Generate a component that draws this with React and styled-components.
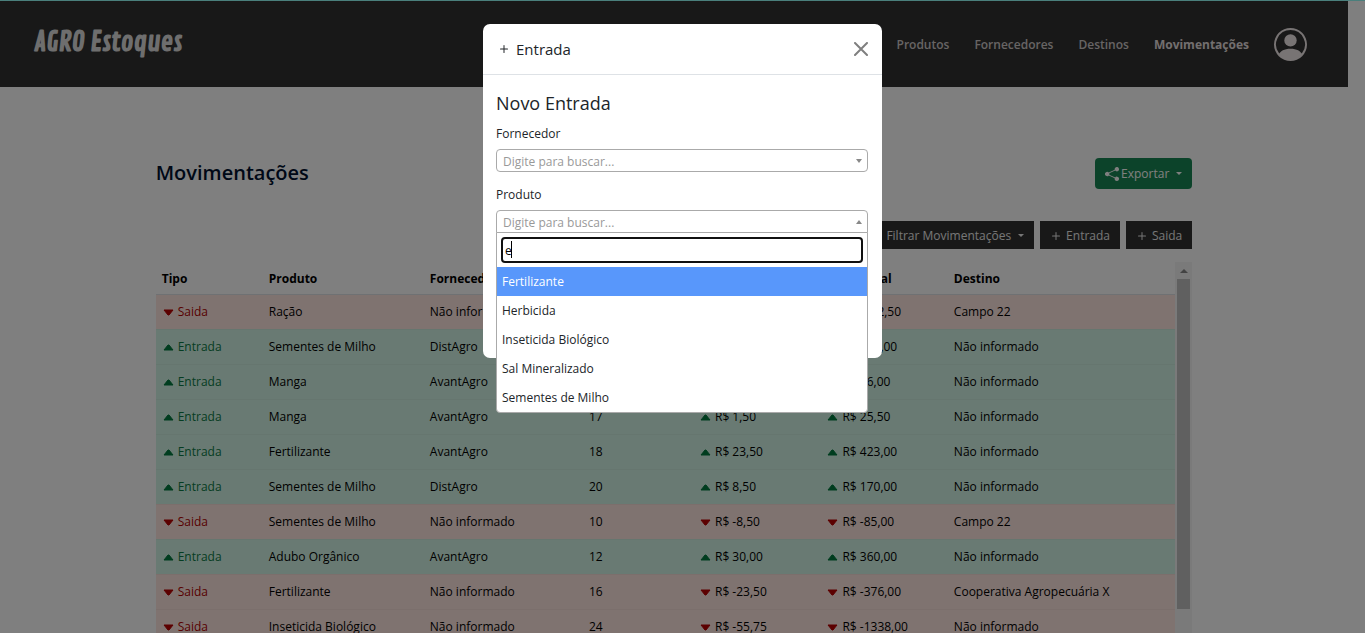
import React from "react";
import styled, { createGlobalStyle } from "styled-components";
import { BsPersonCircle, BsPlus, BsFunnel, BsShareFill } from "react-icons/bs";

const GlobalStyle = createGlobalStyle`
  *, *::before, *::after { box-sizing: border-box; }
  html, body { margin: 0; }
  body {
    overflow: hidden;
    background: #fff;
    color: #212529;
    font-family: "Open Sans", "Noto Sans", sans-serif;
    font-size: 12px;
    line-height: 20px;
  }
  button, input, select { font: inherit; color: inherit; margin: 0; }
  h1, h2, h3, ul { margin: 0; padding: 0; }
`;

const Page = styled.div`
  height: 100vh;
  overflow: hidden;
  border-top: 1px solid #94fff8;
  padding-right: 17px;
`;

const Header = styled.header`
  display: flex;
  align-items: center;
  justify-content: space-between;
  height: 86px;
  padding: 0 41px 0 34px;
  background: #303030;
`;

const Logo = styled.a`
  padding-bottom: 2px;
  color: #dcdcdc;
  font: 700 26px/32px "Contrail One", "Roboto Condensed", sans-serif;
  text-decoration: none;
`;

const Nav = styled.nav`
  display: flex;
  align-items: center;
  gap: 25px;
`;

const NavLink = styled.a`
  padding-top: 1px;
  color: ${(p) => (p.$active ? "#e4dede" : "#cfc9c9")};
  font-weight: ${(p) => (p.$active ? 700 : 600)};
  text-decoration: none;
`;

const ProfileButton = styled.button`
  display: flex;
  padding: 0;
  border: 0;
  background: none;
  color: #f0e8e8;
`;

const Content = styled.main`
  width: 76.9%;
  margin: 0 auto;
  padding-top: 71px;
`;

const TitleRow = styled.div`
  display: flex;
  align-items: center;
  justify-content: space-between;
`;

const Title = styled.h1`
  padding-bottom: 2px;
  color: #00102e;
  font-size: 20px;
  font-weight: 600;
  line-height: 28px;
`;

const ExportButton = styled.button`
  display: flex;
  align-items: center;
  gap: 2px;
  height: 31px;
  padding: 0 10px;
  border: 0;
  border-radius: 4px;
  background: #198754;
  color: #fff;
`;

const Caret = styled.span`
  margin-left: 5px;
  border: solid transparent;
  border-width: 3px 3px 0;
  border-top-color: currentColor;
`;

const Toolbar = styled.div`
  display: flex;
  justify-content: flex-end;
  gap: 6px;
  padding: 32px 0 13px;
`;

const DarkButton = styled.button`
  display: flex;
  align-items: center;
  gap: 2px;
  height: 28px;
  padding: 1px 10px 0 8px;
  border: 0;
  background: #303030;
  color: #ececec;
`;

const FilterIcon = styled(BsFunnel)`
  margin-right: 3px;
`;

const TableBox = styled.div`
  display: flex;
`;

const Table = styled.table`
  flex: 1;
  table-layout: fixed;
  border-collapse: collapse;
  color: #000;
`;

const HeadCell = styled.th`
  width: ${(p) => p.$width};
  height: 32px;
  padding: 2px 6px 0;
  border-bottom: 1px solid #dee2e6;
  font-weight: 700;
  text-align: left;
  white-space: nowrap;
`;

const Row = styled.tr`
  background: ${(p) => (p.$out ? "#ffe6e0" : "#d3f5e6")};
`;

const Cell = styled.td`
  height: 35px;
  padding: 1px 6px 0;
  border-bottom: 1px solid rgba(0, 0, 0, 0.03);
  color: ${(p) => p.$color || "#000"};
  white-space: nowrap;
`;

const Trend = styled.span`
  display: flex;
  align-items: center;
  gap: 4px;
  padding-left: 1px;

  svg { color: ${(p) => (p.$out ? "#b80000" : "#007a3e")}; }
`;

const Track = styled.div`
  width: 17px;
  padding: 0 2px;
  background: #f4f4f4;
`;

const TrackArrow = styled.div`
  display: flex;
  align-items: center;
  justify-content: center;
  height: 17px;

  &::before {
    content: "";
    border: solid transparent;
    border-width: 0 4px 4px;
    border-bottom-color: #868686;
  }
`;

const Thumb = styled.div`
  height: 330px;
  background: #c1c1c1;
`;

const Backdrop = styled.div`
  position: fixed;
  inset: 0;
  background: rgba(0, 0, 0, 0.5);
`;

const Modal = styled.div`
  position: relative;
  width: 399px;
  min-height: 334px;
  margin: 24px auto 0;
  border-radius: 7px;
  background: #fff;
`;

const ModalHeader = styled.div`
  display: flex;
  align-items: center;
  justify-content: space-between;
  height: 51px;
  padding: 0 14px 0 13px;
  border-bottom: 1px solid #dee2e6;
`;

const ModalTitle = styled.h2`
  display: flex;
  align-items: center;
  gap: 4px;
  font-size: 15px;
  font-weight: 400;
`;

const CloseButton = styled.button`
  display: flex;
  padding: 0;
  border: 0;
  background: none;
  color: #7f7f7f;
`;

const ModalBody = styled.div`
  padding: 15px 14px 16px 13px;
`;

const FormTitle = styled.h3`
  margin-bottom: 8px;
  font-size: 18px;
  font-weight: 400;
  line-height: 26px;
`;

const Field = styled.div`
  position: relative;
  margin-bottom: 13px;
`;

const Label = styled.label`
  display: block;
  margin-bottom: 5px;
`;

const SelectBox = styled.div`
  display: flex;
  align-items: center;
  height: 23px;
  padding-right: 5px;
  border: 1px solid #aaa;
  border-radius: ${(p) => (p.$open ? "4px 4px 0 0" : "4px")};

  &::after {
    content: "";
    border: solid transparent;
    border-width: ${(p) => (p.$open ? "0 3px 4px" : "4px 3px 0")};
    border-top-color: ${(p) => (p.$open ? "transparent" : "#888")};
    border-bottom-color: ${(p) => (p.$open ? "#888" : "transparent")};
  }
`;

const Select = styled.select`
  flex: 1;
  height: 21px;
  padding: 2px 6px 0;
  border: 0;
  outline: 0;
  appearance: none;
  background: none;
  color: #999;
`;

const Menu = styled.div`
  position: absolute;
  top: 100%;
  left: 0;
  right: 0;
  margin-top: -1px;
  border: 1px solid #aaa;
  border-radius: 0 0 4px 4px;
  background: #fff;
`;

const SearchBox = styled.div`
  position: relative;
  padding: 4px;
`;

const SearchInput = styled.input`
  display: block;
  width: 100%;
  height: 26px;
  padding: 0 2px;
  border: 2px solid #101010;
  border-radius: 4px;
  outline: 0;
  background: #fff;
  color: #000;
`;

const TextCaret = styled.span`
  position: absolute;
  top: 8px;
  left: 14px;
  width: 1px;
  height: 17px;
  background: #000;
`;

const Options = styled.ul`
  list-style: none;
`;

const Option = styled.li`
  height: 29px;
  padding: 5px;
  line-height: 19px;
  background: ${(p) => (p.$active ? "#5897fb" : "transparent")};
  color: ${(p) => (p.$active ? "#fff" : "#212529")};
`;

const columns = [
  ["Tipo", "10.5%"],
  ["Produto", "15.8%"],
  ["Fornecedor", "15.6%"],
  ["Quantidade", "10.8%"],
  ["Valor", "12.5%"],
  ["Valor Total", "12.5%"],
  ["Destino", "22.3%"],
];

const rows = [
  ["Saida", "Ração", "Não informado", "15", "R$ -27,50", "R$ -412,50", "Campo 22"],
  ["Entrada", "Sementes de Milho", "DistAgro", "20", "R$ 8,50", "R$ 170,00", "Não informado"],
  ["Entrada", "Manga", "AvantAgro", "24", "R$ 1,50", "R$ 36,00", "Não informado"],
  ["Entrada", "Manga", "AvantAgro", "17", "R$ 1,50", "R$ 25,50", "Não informado"],
  ["Entrada", "Fertilizante", "AvantAgro", "18", "R$ 23,50", "R$ 423,00", "Não informado"],
  ["Entrada", "Sementes de Milho", "DistAgro", "20", "R$ 8,50", "R$ 170,00", "Não informado"],
  ["Saida", "Sementes de Milho", "Não informado", "10", "R$ -8,50", "R$ -85,00", "Campo 22"],
  ["Entrada", "Adubo Orgânico", "AvantAgro", "12", "R$ 30,00", "R$ 360,00", "Não informado"],
  ["Saida", "Fertilizante", "Não informado", "16", "R$ -23,50", "R$ -376,00", "Cooperativa Agropecuária X"],
  ["Saida", "Inseticida Biológico", "Não informado", "24", "R$ -55,75", "R$ -1338,00", "Não informado"],
];

const products = ["Fertilizante", "Herbicida", "Inseticida Biológico", "Sal Mineralizado", "Sementes de Milho"];

function TrendValue({ out, children }) {
  return (
    <Trend $out={out}>
      <svg width="11" height="7" viewBox="0 0 11 7" fill="currentColor" stroke="currentColor" strokeLinejoin="round">
        <path d={out ? "M1 1h9L6 6H5z" : "M1 6h9L6 1H5z"} />
      </svg>
      {children}
    </Trend>
  );
}

function MovementRow({ data }) {
  const [type, product, supplier, amount, price, total, target] = data;
  const out = type === "Saida";
  return (
    <Row $out={out}>
      <Cell $color={out ? "#b00000" : "#0a7a45"}><TrendValue out={out}>{type}</TrendValue></Cell>
      <Cell>{product}</Cell>
      <Cell>{supplier}</Cell>
      <Cell>{amount}</Cell>
      <Cell><TrendValue out={out}>{price}</TrendValue></Cell>
      <Cell><TrendValue out={out}>{total}</TrendValue></Cell>
      <Cell>{target}</Cell>
    </Row>
  );
}

export default function App() {
  return (
    <>
      <GlobalStyle />
      <Page>
        <Header>
          <Logo href="#">AGRO Estoques</Logo>
          <Nav>
            <NavLink href="#produtos">Produtos</NavLink>
            <NavLink href="#fornecedores">Fornecedores</NavLink>
            <NavLink href="#destinos">Destinos</NavLink>
            <NavLink href="#movimentacoes" $active>Movimentações</NavLink>
            <ProfileButton aria-label="Perfil"><BsPersonCircle size={33} /></ProfileButton>
          </Nav>
        </Header>
        <Content>
          <TitleRow>
            <Title>Movimentações</Title>
            <ExportButton><BsShareFill size={14} />Exportar<Caret /></ExportButton>
          </TitleRow>
          <Toolbar>
            <DarkButton><FilterIcon size={12} />Filtrar Movimentações<Caret /></DarkButton>
            <DarkButton><BsPlus size={16} />Entrada</DarkButton>
            <DarkButton><BsPlus size={16} />Saida</DarkButton>
          </Toolbar>
          <TableBox>
            <Table>
              <thead>
                <tr>{columns.map(([name, width]) => <HeadCell key={name} $width={width}>{name}</HeadCell>)}</tr>
              </thead>
              <tbody>{rows.map((data, i) => <MovementRow key={i} data={data} />)}</tbody>
            </Table>
            <Track><TrackArrow /><Thumb /></Track>
          </TableBox>
        </Content>
      </Page>
      <Backdrop>
        <Modal role="dialog" aria-labelledby="modal-title">
          <ModalHeader>
            <ModalTitle id="modal-title"><BsPlus size={16} />Entrada</ModalTitle>
            <CloseButton aria-label="Fechar">
              <svg width="14" height="14" viewBox="0 0 14 14" fill="none" stroke="currentColor" strokeWidth="2" strokeLinecap="round">
                <path d="M1 1l12 12M13 1L1 13" />
              </svg>
            </CloseButton>
          </ModalHeader>
          <ModalBody>
            <FormTitle>Novo Entrada</FormTitle>
            <Field>
              <Label htmlFor="supplier">Fornecedor</Label>
              <SelectBox>
                <Select id="supplier"><option>Digite para buscar...</option></Select>
              </SelectBox>
            </Field>
            <Field>
              <Label htmlFor="product">Produto</Label>
              <SelectBox $open>
                <Select id="product"><option>Digite para buscar...</option></Select>
              </SelectBox>
              <Menu>
                <SearchBox>
                  <SearchInput type="search" aria-label="Buscar produto" defaultValue="e" />
                  <TextCaret />
                </SearchBox>
                <Options role="listbox" aria-label="Produtos">
                  {products.map((name, i) => (
                    <Option key={name} role="option" aria-selected={i === 0} $active={i === 0}>{name}</Option>
                  ))}
                </Options>
              </Menu>
            </Field>
          </ModalBody>
        </Modal>
      </Backdrop>
    </>
  );
}
